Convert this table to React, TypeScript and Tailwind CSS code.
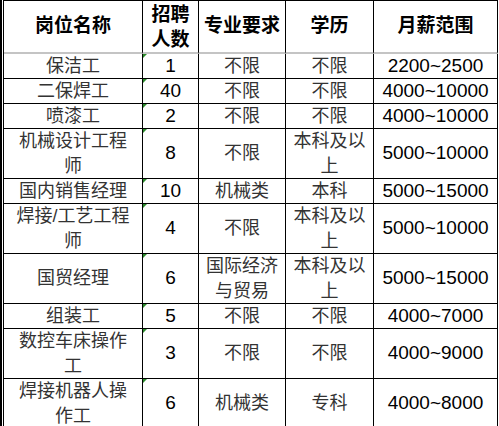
import React from 'react';

const CJK = "font-['Liberation_Sans','Noto_Sans_CJK_SC',sans-serif]";

type Row = {
    name: React.ReactNode;
    count: string;
    major: React.ReactNode;
    edu: React.ReactNode;
    pay: string;
    tall?: boolean;
};

const ROWS: Row[] = [
    { name: '保洁工', count: '1', major: '不限', edu: '不限', pay: '2200~2500' },
    { name: '二保焊工', count: '40', major: '不限', edu: '不限', pay: '4000~10000' },
    { name: '喷漆工', count: '2', major: '不限', edu: '不限', pay: '4000~10000' },
    { name: <>机械设计工程<br />师</>, count: '8', major: '不限', edu: <>本科及以<br />上</>, pay: '5000~10000', tall: true },
    { name: '国内销售经理', count: '10', major: '机械类', edu: '本科', pay: '5000~15000' },
    { name: <>焊接/工艺工程<br />师</>, count: '4', major: '不限', edu: <>本科及以<br />上</>, pay: '5000~10000', tall: true },
    { name: '国贸经理', count: '6', major: <>国际经济<br />与贸易</>, edu: <>本科及以<br />上</>, pay: '5000~15000', tall: true },
    { name: '组装工', count: '5', major: '不限', edu: '不限', pay: '4000~7000' },
    { name: <>数控车床操作<br />工</>, count: '3', major: '不限', edu: '不限', pay: '4000~9000', tall: true },
    { name: <>焊接机器人操<br />作工</>, count: '6', major: '机械类', edu: '专科', pay: '4000~8000', tall: true },
];

const cell = 'flex items-center justify-center text-center border-r border-b border-black';

export default function App() {
    return (
        <div className={`w-[499px] h-[426px] overflow-hidden bg-white flex ${CJK}`}>
            <div className="w-[2px] shrink-0 bg-black" />
            <div className="w-px shrink-0 bg-white" />
            <div className="grid grid-cols-[139px_56px_87px_88px_124px] border-l border-t border-black content-start">
                {/* header */}
                <div className="h-[53px] flex items-center justify-center border-r border-black border-b-2 border-b-[#c4c4c4] text-[19px] font-bold text-black">岗位名称</div>
                <div className="h-[53px] flex items-center justify-center border-r border-black border-b-2 border-b-[#c4c4c4] text-[19px] font-bold text-black leading-[25px] text-center">招聘<br />人数</div>
                <div className="h-[53px] flex items-center justify-center border-r border-black border-b-2 border-b-[#c4c4c4] text-[19px] font-bold text-black">专业要求</div>
                <div className="h-[53px] flex items-center justify-center border-r border-black border-b-2 border-b-[#c4c4c4] text-[19px] font-bold text-black">学历</div>
                <div className="h-[53px] flex items-center justify-center border-r border-black border-b-2 border-b-[#c4c4c4] text-[19px] font-bold text-black">月薪范围</div>

                {ROWS.map((r, i) => {
                    const h = r.tall ? 'h-[50px]' : 'h-[25px]';
                    return (
                        <React.Fragment key={i}>
                            <div className={`${cell} ${h} text-[18px] leading-[25px] text-[#333]`}>{r.name}</div>
                            <div className={`${cell} ${h} relative text-[19px] text-black`}>
                                <span className="absolute left-0 top-0 w-0 h-0 border-t-[4px] border-r-[4px] border-t-[#2a8a2a] border-r-transparent" />
                                {r.count}
                            </div>
                            <div className={`${cell} ${h} text-[18px] leading-[25px] text-[#333]`}>{r.major}</div>
                            <div className={`${cell} ${h} text-[18px] leading-[25px] text-[#333]`}>{r.edu}</div>
                            <div className={`${cell} ${h} text-[19px] text-black`}>{r.pay}</div>
                        </React.Fragment>
                    );
                })}
            </div>
        </div>
    );
}
